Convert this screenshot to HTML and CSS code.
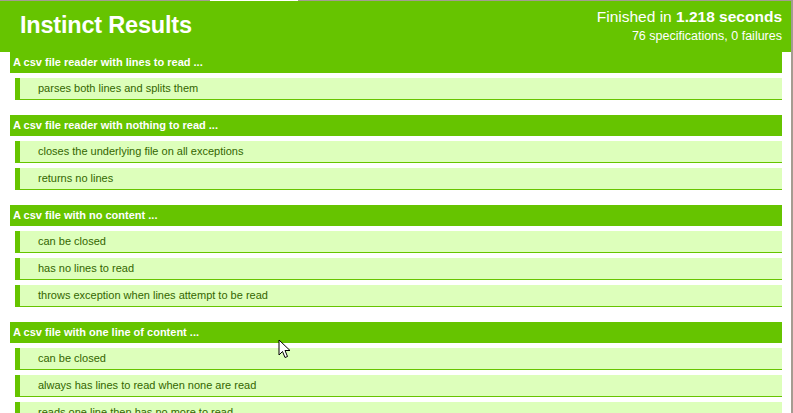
FILE: index.html
```html
<!DOCTYPE html>
<html>
<head>
<meta charset="utf-8">
<title>Instinct Results</title>
<link rel="stylesheet" href="styles.css">
</head>
<body>
<div class="frame">
  <div class="topline"><span class="tab"></span></div>
  <header class="header">
    <h1 class="title">Instinct Results</h1>
    <div class="summary">
      <div class="duration">Finished in <strong>1.218 seconds</strong></div>
      <div class="counts">76 specifications, 0 failures</div>
    </div>
  </header>

  <section class="context">
    <h2 class="context-name">A csv file reader with lines to read ...</h2>
    <div class="spec">parses both lines and splits them</div>
  </section>

  <section class="context">
    <h2 class="context-name">A csv file reader with nothing to read ...</h2>
    <div class="spec">closes the underlying file on all exceptions</div>
    <div class="spec">returns no lines</div>
  </section>

  <section class="context">
    <h2 class="context-name">A csv file with no content ...</h2>
    <div class="spec">can be closed</div>
    <div class="spec">has no lines to read</div>
    <div class="spec">throws exception when lines attempt to be read</div>
  </section>

  <section class="context">
    <h2 class="context-name">A csv file with one line of content ...</h2>
    <div class="spec">can be closed</div>
    <div class="spec">always has lines to read when none are read</div>
    <div class="spec">reads one line then has no more to read</div>
  </section>

  <svg class="cursor" width="13" height="20" viewBox="0 0 13 20">
    <path d="M1 1 L1 16 L4.5 12.5 L7 18.5 L9.5 17.5 L7 11.5 L12 11.5 Z" fill="#fff" stroke="#000" stroke-width="1" stroke-linejoin="miter"/>
  </svg>
</div>
</body>
</html>
```

FILE: styles.css
```css
html, body {
  margin: 0;
  padding: 0;
  overflow: hidden;
  background: #ffffff;
}

body {
  font-family: "Liberation Sans", Arial, Helvetica, sans-serif;
}

.frame {
  position: relative;
  width: 791px;
  height: 413px;
  border-right: 2px solid #a49c91;
  overflow: hidden;
}

.topline {
  height: 1px;
  background: #a49c91;
  position: relative;
}

.tab {
  position: absolute;
  left: 210px;
  top: 0;
  width: 88px;
  height: 1px;
  background: #ffffff;
}

.header {
  display: flex;
  justify-content: space-between;
  align-items: flex-start;
  height: 51px;
  background: #66c400;
  color: #ffffff;
  padding: 0 9px 0 20px;
}

.title {
  margin: 0;
  padding-top: 12px;
  font-size: 23.5px;
  line-height: 24px;
  font-weight: bold;
  letter-spacing: -0.2px;
}

.summary {
  text-align: right;
  padding-top: 7px;
}

.duration {
  font-size: 15.5px;
  line-height: 18px;
}

.duration strong {
  font-weight: bold;
}

.counts {
  font-size: 12.5px;
  line-height: 14px;
  margin-top: 3px;
}

.context {
  margin: 0 9px 15px 10px;
}

.context-name {
  margin: 0;
  height: 21px;
  background: #66c400;
  color: #ffffff;
  font-size: 11px;
  line-height: 21px;
  font-weight: bold;
  padding-left: 3px;
}

.spec {
  margin: 5px 0 0 5px;
  height: 21px;
  line-height: 21px;
  background: #ddffbb;
  border-left: 5px solid #66c400;
  border-bottom: 1px solid #66c400;
  color: #336600;
  font-size: 11px;
  padding-left: 18px;
}

.cursor {
  position: absolute;
  left: 278px;
  top: 339px;
}
```
